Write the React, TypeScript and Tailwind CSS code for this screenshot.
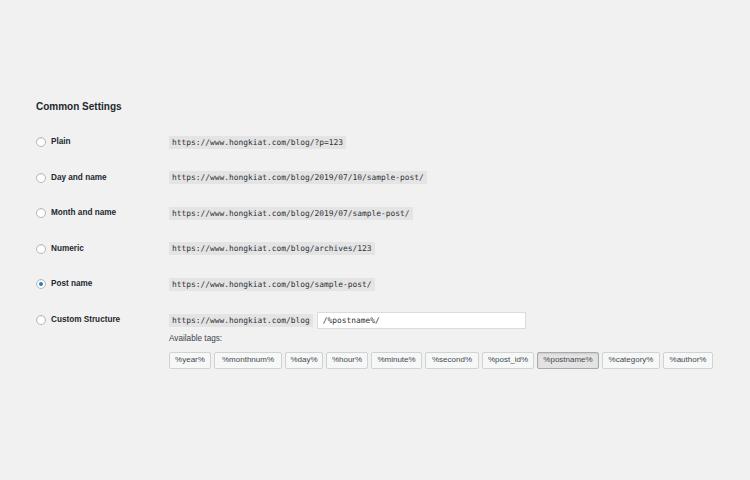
const rows = [
  { label: 'Plain', url: 'https://www.hongkiat.com/blog/?p=123' },
  { label: 'Day and name', url: 'https://www.hongkiat.com/blog/2019/07/10/sample-post/' },
  { label: 'Month and name', url: 'https://www.hongkiat.com/blog/2019/07/sample-post/' },
  { label: 'Numeric', url: 'https://www.hongkiat.com/blog/archives/123' },
  { label: 'Post name', url: 'https://www.hongkiat.com/blog/sample-post/', checked: true },
];

const tags = [
  { name: '%year%', w: 'w-[42px]' },
  { name: '%monthnum%', w: 'w-[68px]' },
  { name: '%day%', w: 'w-[38px]' },
  { name: '%hour%', w: 'w-[42px]' },
  { name: '%minute%', w: 'w-[51px]' },
  { name: '%second%', w: 'w-[54px]' },
  { name: '%post_id%', w: 'w-[52px]' },
  { name: '%postname%', w: 'w-[62px]', active: true },
  { name: '%category%', w: 'w-[58px]' },
  { name: '%author%', w: 'w-[50px]' },
];

const Radio = ({ checked }: { checked?: boolean }) => (
  <span className="w-[10px] h-[10px] rounded-full border border-[#b4b9be] bg-white shadow-[inset_0_1px_1px_rgba(0,0,0,0.08)] flex items-center justify-center shrink-0">
    {checked && <span className="w-[4px] h-[4px] rounded-full bg-[#2d7cc0]" />}
  </span>
);

const Code = ({ children }: { children: React.ReactNode }) => (
  <code className="bg-[#e4e4e4] text-[#2c3036] px-[3px] text-[7.9px] leading-[13px] font-['DejaVu_Sans_Mono',monospace] whitespace-nowrap">
    {children}
  </code>
);

export default function App() {
  return (
    <div className="w-[750px] h-[480px] bg-[#f1f1f1] pl-[36px] pt-[100px] font-['Liberation_Sans',Arial,sans-serif] text-[#23282d] overflow-hidden">
      <h2 className="text-[10px] leading-[14px] font-bold">Common Settings</h2>

      <div className="mt-[10.5px] flex flex-col">
        {rows.map((r) => (
          <div key={r.label} className="flex items-center h-[35.5px]">
            <div className="w-[133px] flex items-center gap-[5px]">
              <Radio checked={r.checked} />
              <span className="text-[8.2px] font-bold">{r.label}</span>
            </div>
            <Code>{r.url}</Code>
          </div>
        ))}

        {/* custom structure */}
        <div className="flex items-start">
          <div className="w-[133px] h-[35.5px] flex items-center gap-[5px]">
            <Radio />
            <span className="text-[8.2px] font-bold">Custom Structure</span>
          </div>
          <div className="pt-[9.5px]">
            <div className="flex items-center gap-[4px] h-[17px]">
              <Code>https://www.hongkiat.com/blog</Code>
              <input
                readOnly
                value="/%postname%/"
                className="w-[209px] h-[17px] bg-white border border-[#dcdcde] px-[5px] text-[7.9px] text-[#2c3036] font-['DejaVu_Sans_Mono',monospace] outline-none"
              />
            </div>
            <p className="mt-[4px] text-[8.2px] leading-[12px] text-[#3c434a]">Available tags:</p>
            <div className="mt-[7px] flex gap-[3px]">
              {tags.map((t) => (
                <button
                  key={t.name}
                  className={`${t.w} h-[17px] rounded-[2px] border text-[8px] text-[#444a50] flex items-center justify-center ${
                    t.active
                      ? 'bg-[#e3e3e3] border-[#a7aaad] shadow-[inset_0_1px_2px_rgba(0,0,0,0.1)]'
                      : 'bg-[#f6f7f7] border-[#d0d2d4]'
                  }`}
                >
                  {t.name}
                </button>
              ))}
            </div>
          </div>
        </div>
      </div>
    </div>
  );
}
